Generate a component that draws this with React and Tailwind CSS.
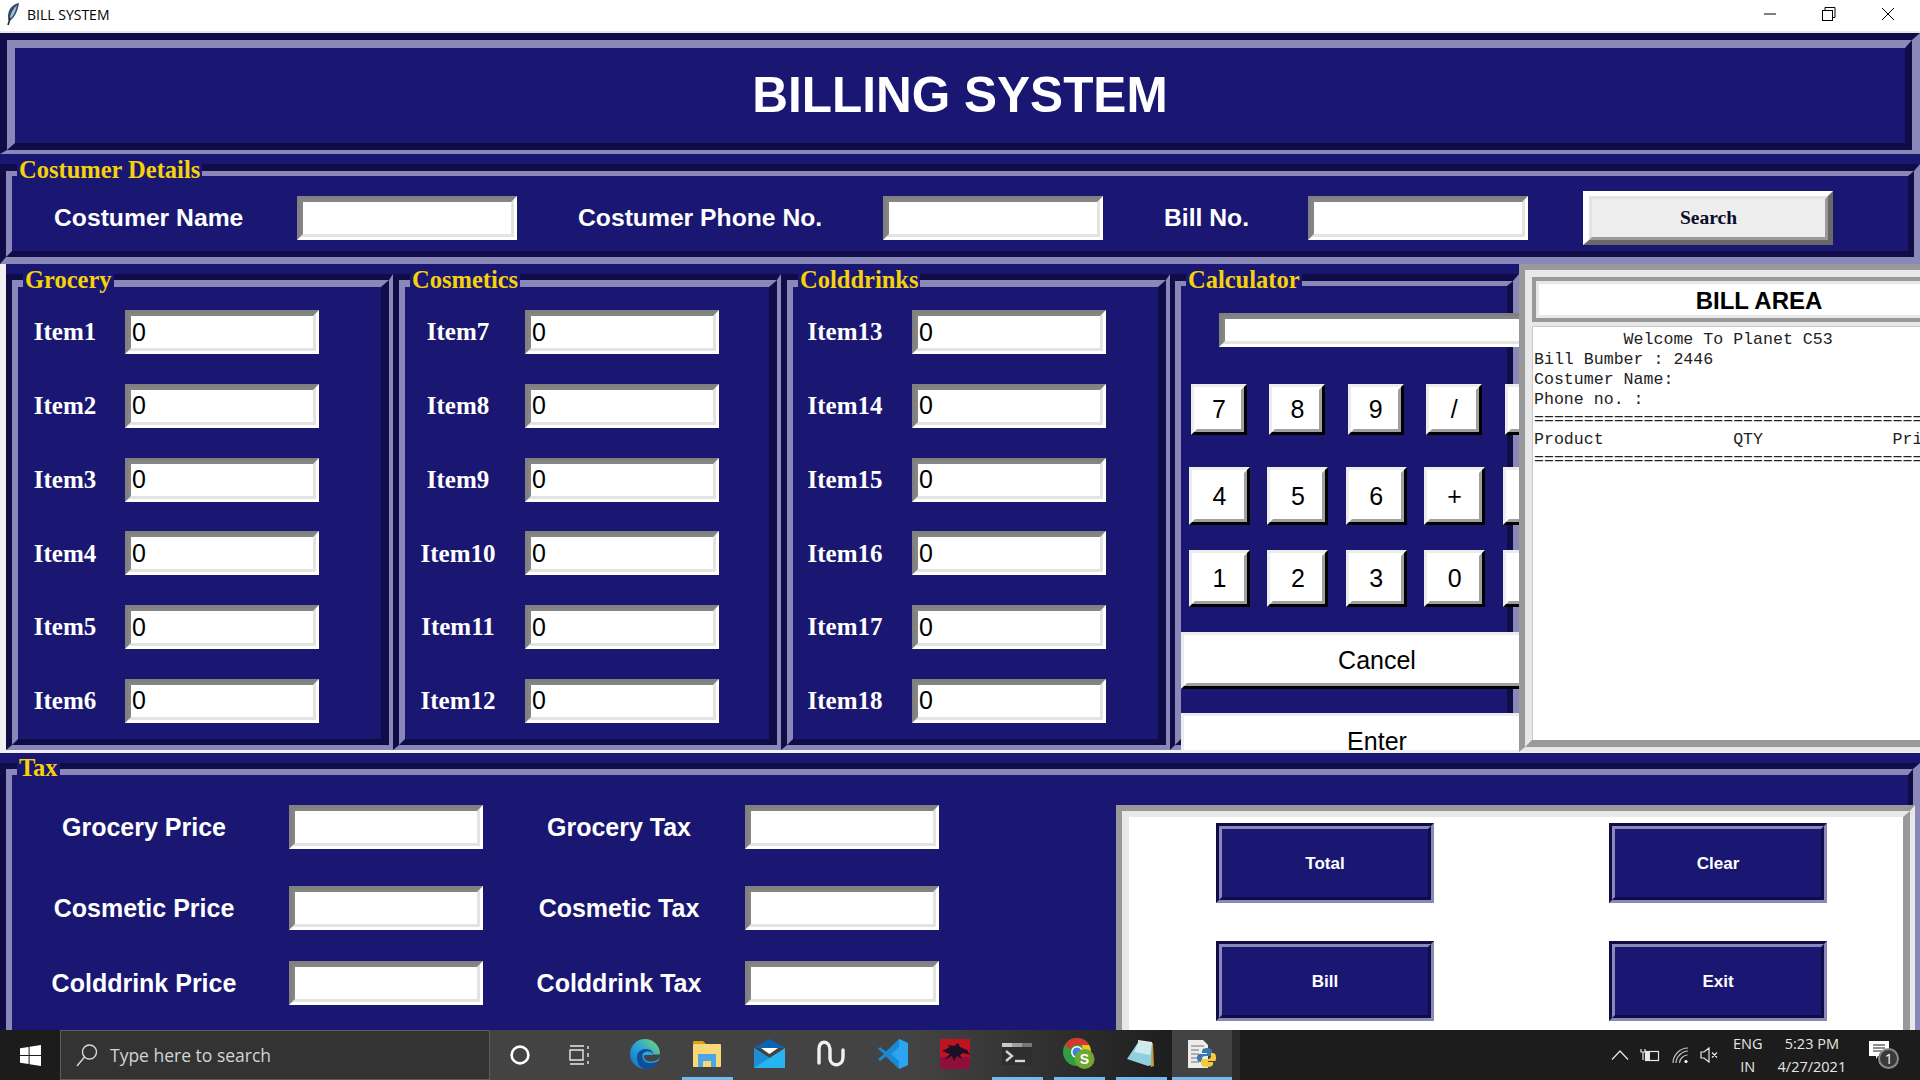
const serif = "font-['Liberation_Serif',serif]";
const arial = "font-['Liberation_Sans',Arial,sans-serif]";
const segoe = "font-['Open_Sans',sans-serif]";

const grocery = ["Item1", "Item2", "Item3", "Item4", "Item5", "Item6"];
const cosmetics = ["Item7", "Item8", "Item9", "Item10", "Item11", "Item12"];
const colddrinks = ["Item13", "Item14", "Item15", "Item16", "Item17", "Item18"];
const billLine = "=".repeat(60);

const Legend = ({ text, className }) => (
  <span className={`absolute z-10 bg-[#1a1772] px-[2px] text-[24.5px] leading-[24px] font-bold whitespace-nowrap text-[#f5d20a] ${serif} ${className}`}>
    {text}
  </span>
);

const Field = ({ value, className = "" }) => (
  <div className={`box-border h-[44px] shrink-0 border-[3px] border-t-[#808080] border-r-white border-b-white border-l-[#808080] ${className}`}>
    <input
      readOnly
      value={value ?? ""}
      className={`box-border block h-full w-full border-[3px] border-t-[#858585] border-r-[#e3e3e3] border-b-[#e3e3e3] border-l-[#858585] bg-white pl-[1px] text-[25px] text-black outline-none ${arial}`}
    />
  </div>
);

const ItemFrame = ({ title, items, widthClass, labelClass }) => (
  <div className={`relative box-border h-[476px] shrink-0 border-t-[6px] border-r-[4px] border-b-[5px] border-l-[6px] border-t-[#100c48] border-r-[#8a88b8] border-b-[#8a88b8] border-l-[#100c48] ${widthClass}`}>
    <Legend text={title} className="top-[-12px] left-[11px]" />
    <div className="box-border flex h-full flex-col gap-[29.8px] border-t-[7px] border-r-[8px] border-b-[6px] border-l-[6px] border-t-[#8a88b8] border-r-[#100c48] border-b-[#100c48] border-l-[#8a88b8] pt-[23px]">
      {items.map((item) => (
        <div key={item} className="flex items-center">
          <span className={`text-center text-[25px] font-bold text-white ${serif} ${labelClass}`}>{item}</span>
          <Field value="0" className="w-[194px]" />
        </div>
      ))}
    </div>
  </div>
);

const CalcKey = ({ label, className }) => (
  <div className={`box-border shrink-0 border-[3px] border-t-[#ececec] border-r-black border-b-black border-l-[#ececec] ${className}`}>
    <button className={`box-border block h-full w-full border-[3px] border-t-white border-r-[#a0a0a0] border-b-[#a0a0a0] border-l-white bg-white pt-[1px] text-[25px] text-black ${arial}`}>
      {label}
    </button>
  </div>
);

const TaxRow = ({ first, second, className }) => (
  <div className={`flex items-center ${className}`}>
    <span className={`w-[264px] pt-[1px] text-center text-[25px] font-bold whitespace-nowrap text-white ${arial}`}>{first}</span>
    <Field className="ml-[13px] w-[194px]" />
    <span className={`ml-[20px] w-[232px] pt-[1px] text-center text-[25px] font-bold whitespace-nowrap text-white ${arial}`}>{second}</span>
    <Field className="ml-[10px] w-[194px]" />
  </div>
);

const ActionButton = ({ label }) => (
  <div className="box-border h-[80px] w-[218px] border-[3px] border-t-[#100c48] border-r-[#8a88b8] border-b-[#8a88b8] border-l-[#100c48]">
    <button className={`box-border block h-full w-full border-[3px] border-t-[#8a88b8] border-r-[#100c48] border-b-[#100c48] border-l-[#8a88b8] bg-[#1a1772] pt-[2px] text-[17px] font-bold text-white ${arial}`}>
      {label}
    </button>
  </div>
);

const Feather = () => (
  <svg width="12" height="22" viewBox="0 0 12 22">
    <path d="M12 0C6 1 1 6 1 13c0 2 0 4 1 5 6-3 9-11 10-18z" fill="#2f4c72" />
    <path d="M10 2C7 5 4 9 3 14l1 1c3-3 5-8 6-13z" fill="#a9bdd4" />
    <path d="M3 16 1 22" stroke="#222" strokeWidth="1.6" />
  </svg>
);

const StartIcon = () => (
  <svg width="21" height="21" viewBox="0 0 21 21" fill="white">
    <path d="M0 3.2 8.6 2v8H0zM9.6 1.8 21 0v10H9.6zM0 11h8.6v8L0 17.8zM9.6 11H21v10L9.6 19.2z" />
  </svg>
);

const SearchIcon = () => (
  <svg width="24" height="24" viewBox="0 0 24 24" fill="none" stroke="#d8d8d8" strokeWidth="1.4">
    <circle cx="14.5" cy="9" r="7" />
    <path d="M9.5 14 2 23" />
  </svg>
);

const CortanaIcon = () => (
  <svg width="22" height="22" viewBox="0 0 22 22" fill="none" stroke="white" strokeWidth="2.6">
    <circle cx="11" cy="11" r="8.4" />
  </svg>
);

const TaskViewIcon = () => (
  <svg width="22" height="20" viewBox="0 0 22 20" fill="none" stroke="#e8e8e8" strokeWidth="1.4">
    <path d="M1 1h14M1 19h14M1 5h13v10H1zM19 1v3M19 8v4M19 16v3" />
  </svg>
);

const EdgeIcon = () => (
  <svg width="32" height="32" viewBox="0 0 32 32">
    <defs>
      <linearGradient id="edgeA" x1="0" y1="1" x2="1" y2="0">
        <stop offset="0" stopColor="#0f6cbd" />
        <stop offset="0.55" stopColor="#2fa8d8" />
        <stop offset="1" stopColor="#7ddc5c" />
      </linearGradient>
    </defs>
    <circle cx="16" cy="16" r="15" fill="url(#edgeA)" />
    <path d="M8 19c0-5 4-8 9-8 5 0 8 3 7 6H15c-2 0-2 2-1 4 1 3 4 4 8 4 3 0 6-1 8-3-2 5-7 9-13 9-6 0-9-6-9-12z" fill="#0b4f9c" />
    <path d="M31 16c0 1 0 2-.5 3.500-1 2-4 4-8.500 4-4 0-7-2-7-5 0-1 1-2 2-2h9c2 0 4 0 5.500-.5z" fill="#434343" />
    <path d="M13 18.500c0-3 3-5 6-5 3 0 5 1 5 3.500h-9c-1 0-2 .5-2 1.500z" fill="#2fa8d8" />
  </svg>
);

const ExplorerIcon = () => (
  <svg width="28" height="26" viewBox="0 0 28 26">
    <path d="M0 1a1 1 0 0 1 1-1h9l3 3h-13z" fill="#e0a11a" />
    <rect y="3" width="28" height="23" rx="1" fill="#f9d877" />
    <path d="M5 13h18v13h-5v-6h-8v6H5z" fill="#4ba5e6" />
    <rect x="10" y="20" width="8" height="6" fill="#f9d877" />
  </svg>
);

const MailIcon = () => (
  <svg width="31" height="29" viewBox="0 0 31 29">
    <path d="M0 9 15.500 0 31 9z" fill="#0b63b5" />
    <path d="M7 9h17l-8.500 6z" fill="white" />
    <path d="M0 9l15.500 10L31 9v20H0z" fill="#27b4ef" />
    <path d="M0 9l15.500 10L0 29z" fill="#1c8fd8" />
  </svg>
);

const WaveIcon = () => (
  <svg width="28" height="30" viewBox="0 0 28 30" fill="none" stroke="#f0f0f0" strokeWidth="3.4" strokeLinecap="round">
    <path d="M2 24V10c0-9 10-9 11 0v10c1 8 13 8 13-2v-7" />
  </svg>
);

const CodeIcon = () => (
  <svg width="30" height="30" viewBox="0 0 30 30">
    <path d="M21 0 30 4v22l-9 4-13-12.500L2 22l-2-2 6-5-6-5 2-2 6 4.500z" fill="#1b88d4" />
    <path d="M21 0 30 4v22l-9 4zM21 8l-8 7 8 7z" fill="#2ba5ee" fillRule="evenodd" />
  </svg>
);

const DragonIcon = () => (
  <svg width="30" height="30" viewBox="0 0 30 30">
    <rect width="30" height="30" fill="#c1121f" />
    <rect y="18" width="30" height="12" fill="#8f0f3a" />
    <path d="M2 12 10 8 7 6l7 1 4-3 2 4 7 3 3 5-7-2-3 2 2 4-5-3-3 5-2-5-8 4 6-6z" fill="#1a0f26" />
  </svg>
);

const TerminalIcon = () => (
  <svg width="30" height="22" viewBox="0 0 30 22">
    <rect width="30" height="22" rx="1" fill="#2e2e2e" />
    <rect width="10" height="4" fill="#c8c8c8" />
    <rect x="10" width="10" height="4" fill="#a0a0a0" />
    <rect x="20" width="10" height="4" fill="#777" />
    <path d="M4 8l6 5-6 5" fill="none" stroke="#d0d0d0" strokeWidth="2.4" />
    <path d="M13 18h10" stroke="#d8d8d8" strokeWidth="2.4" />
  </svg>
);

const ChromeIcon = () => (
  <svg width="32" height="32" viewBox="0 0 32 32">
    <circle cx="14" cy="14" r="14" fill="#2f9e44" />
    <path d="M14 0a14 14 0 0 1 12.100 7H14a7 7 0 0 0-6.500 4.500L2 7a14 14 0 0 1 12-7z" fill="#d8362a" />
    <path d="M26.100 7A14 14 0 0 1 28 14l-8 2-1-9z" fill="#f6c026" />
    <circle cx="14" cy="14" r="6" fill="white" />
    <circle cx="14" cy="14" r="4.500" fill="#3f7fe8" />
    <circle cx="21.500" cy="21" r="10" fill="#6ea832" />
    <text x="21.500" y="26" textAnchor="middle" fontSize="14" fontWeight="700" fill="white" fontFamily="Liberation Sans, sans-serif">S</text>
  </svg>
);

const NotepadIcon = () => (
  <svg width="28" height="27" viewBox="0 0 28 27">
    <path d="M12 1 26 3l1 23-3 1z" fill="#c79a3e" />
    <path d="M12 1 25 3l-1 22-3 1L0 19z" fill="#8fd0dc" />
    <path d="M12 1 25 3 23 15 7 12z" fill="#cfeaee" />
    <path d="M11 0 25 2v2L11 2z" fill="#e8e8e8" />
  </svg>
);

const PythonIcon = () => (
  <svg width="28" height="28" viewBox="0 0 28 28">
    <path d="M0 0h15l5 5v23H0z" fill="#ececec" />
    <path d="M3 6h13M3 10h8M3 14h8M3 18h8M3 22h8" stroke="#9a9a9a" strokeWidth="1.500" />
    <path d="M19 8c-3 0-5 1-5 3v2h5v1h-7c-2 0-3 1.500-3 4 0 2 1 4 3 4h2v-3c0-2 1-3 3-3h5c1 0 2-1 2-2v-3c0-2-2-3-5-3z" fill="#3a76b0" />
    <path d="M20 27c3 0 5-1 5-3v-2h-5v-1h7c1 0 1-2 1-4s-1-4-3-4h-2v3c0 2-1 3-3 3h-5c-1 0-2 1-2 2v3c0 2 3 3 7 3z" fill="#f4c93c" />
  </svg>
);

const apps = [
  { key: "edge", icon: <EdgeIcon /> },
  { key: "explorer", icon: <ExplorerIcon />, open: true },
  { key: "mail", icon: <MailIcon /> },
  { key: "wave", icon: <WaveIcon /> },
  { key: "code", icon: <CodeIcon /> },
  { key: "dragon", icon: <DragonIcon /> },
  { key: "terminal", icon: <TerminalIcon />, open: true },
  { key: "chrome", icon: <ChromeIcon />, open: true },
  { key: "notepad", icon: <NotepadIcon />, open: true },
];

const Taskbar = () => (
  <div className={`flex h-[50px] shrink-0 bg-[#1c1c1c] text-[14.5px] text-[#e6e6e6] ${segoe}`}>
    <div className="flex w-[60px] items-center justify-center pr-[0px]">
      <StartIcon />
    </div>
    <div className="box-border flex w-[430px] items-center border border-[#5c5c5c] bg-[#333333] pl-[14px]">
      <SearchIcon />
      <span className="ml-[11px] text-[17.5px] text-[#d4d4d4]">Type here to search</span>
    </div>
    <div className="flex bg-[linear-gradient(90deg,#434343_0%,#434343_62%,#1e1e1e_100%)]">
      <div className="flex w-[60px] items-center justify-center">
        <CortanaIcon />
      </div>
      <div className="mr-[4px] flex w-[60px] items-center justify-center">
        <TaskViewIcon />
      </div>
      {apps.map((app) => (
        <div key={app.key} className="flex w-[62px] flex-col items-center">
          <div className="flex flex-1 items-center justify-center">{app.icon}</div>
          <div className={`h-[3px] w-[51px] ${app.open ? "bg-[#76b9ed]" : ""}`} />
        </div>
      ))}
    </div>
    <div className="flex w-[60px] flex-col bg-[#434343]">
      <div className="flex flex-1 items-center justify-center">
        <PythonIcon />
      </div>
      <div className="h-[3px] bg-[#76b9ed]" />
    </div>
    <div className="flex flex-1 items-center border-l-[8px] border-l-[#2a2a2a]">
      <svg className="ml-[371px]" width="18" height="10" viewBox="0 0 18 10" fill="none" stroke="#e8e8e8" strokeWidth="1.2">
        <path d="M1 9.500 9 1l8 8.500" />
      </svg>
      <svg className="ml-[11px]" width="20" height="16" viewBox="0 0 20 16" fill="none" stroke="#e8e8e8" strokeWidth="1.2">
        <rect x="5.500" y="4.500" width="13" height="9" />
        <rect x="6" y="5" width="4" height="8" fill="#e8e8e8" stroke="none" />
        <path d="M1 2v3h4V2M3 5v8" />
      </svg>
      <svg className="ml-[12px]" width="17" height="17" viewBox="0 0 17 17" fill="none" stroke="#c8c8c8" strokeWidth="1.1">
        <path d="M1 16C1 8 8 1 16 1M4 16c0-6 6-12 12-12M7.500 16c0-4 4-8 8-8" />
        <circle cx="14" cy="14.500" r="1.600" fill="white" stroke="none" />
      </svg>
      <svg className="ml-[11px]" width="19" height="16" viewBox="0 0 19 16" fill="none" stroke="#e8e8e8" strokeWidth="1.2">
        <path d="M1 5h3l5-4v14l-5-4H1zM12 5.500l5 5M17 5.500l-5 5" />
      </svg>
      <div className="ml-[14px] flex flex-col items-center leading-[23px]">
        <span>ENG</span>
        <span>IN</span>
      </div>
      <div className="ml-[15px] flex flex-col items-center leading-[23px]">
        <span>5:23 PM</span>
        <span>4/27/2021</span>
      </div>
      <div className="relative ml-[23px] h-[28px] w-[30px]">
        <svg width="20" height="18" viewBox="0 0 20 18" fill="white">
          <path d="M0 0h20v15H9l-2 3v-3H0z" />
          <path d="M4 4h12M4 7h12M4 10h9" stroke="#1c1c1c" strokeWidth="1.2" />
        </svg>
        <span className="absolute top-[7px] left-[9px] flex h-[21px] w-[21px] items-center justify-center rounded-full border-2 border-[#8a8a8a] bg-[#3a3a3a] text-[14px] text-white">
          1
        </span>
      </div>
    </div>
  </div>
);

export default function App() {
  return (
    <div className="flex h-screen w-full flex-col overflow-hidden bg-white">
      {/* Window title bar */}
      <div className={`flex h-[33px] shrink-0 items-center border-b-[2px] border-b-[#e9e9e9] bg-white pb-[3px] text-[14px] text-black ${segoe}`}>
        <span className="ml-[7px] flex">
          <Feather />
        </span>
        <span className="ml-[8px] flex-1">BILL SYSTEM</span>
        <svg width="14" height="2" viewBox="0 0 14 2" stroke="black">
          <path d="M0 1h12" />
        </svg>
        <svg className="ml-[44px]" width="14" height="14" viewBox="0 0 14 14" fill="none" stroke="black">
          <rect x="0.500" y="3.500" width="10" height="10" />
          <path d="M3 3V.5h10v10h-2.500" />
        </svg>
        <svg className="mr-[25px] ml-[45px]" width="14" height="14" viewBox="0 0 14 14" fill="none" stroke="black">
          <path d="M1 1l12 12M13 1 1 13" />
        </svg>
      </div>

      <div className="min-h-0 flex-1 overflow-hidden bg-[#1a1772]">
        {/* Heading */}
        <div className="box-border h-[121px] border-t-[7px] border-r-[8px] border-b-[4px] border-l-[7px] border-t-[#100c48] border-r-[#8a88b8] border-b-[#8a88b8] border-l-[#100c48]">
          <div className="box-border flex h-full items-center justify-center border-t-[8px] border-r-[7px] border-b-[7px] border-l-[8px] border-t-[#8a88b8] border-r-[#100c48] border-b-[#100c48] border-l-[#8a88b8]">
            <h1 className={`text-[49.5px] font-bold text-white ${arial}`}>BILLING SYSTEM</h1>
          </div>
        </div>

        {/* Customer details */}
        <div className="relative mt-[10px] box-border h-[100px] border-t-[7px] border-r-[6px] border-b-[7px] border-l-[6px] border-t-[#100c48] border-r-[#8a88b8] border-b-[#8a88b8] border-l-[#100c48]">
          <Legend text="Costumer Details" className="top-[-13px] left-[11px]" />
          <div className={`box-border flex h-full items-center border-t-[5px] border-r-[6px] border-b-[6px] border-l-[6px] border-t-[#8a88b8] border-r-[#100c48] border-b-[#100c48] border-l-[#8a88b8] pt-[9px] text-[24.7px] font-bold whitespace-nowrap text-white ${arial}`}>
            <span className="ml-[42px] w-[243px]">Costumer Name</span>
            <Field className="w-[220px]" />
            <span className="ml-[61px] w-[244px]">Costumer Phone No.</span>
            <Field className="ml-[61px] w-[220px]" />
            <span className="ml-[61px] w-[83px]">Bill No.</span>
            <Field className="ml-[61px] w-[220px]" />
            <div className="ml-[55px] box-border h-[54px] w-[250px] border-t-[5px] border-r-[5px] border-b-[5px] border-l-[6px] border-t-white border-r-[#696969] border-b-[#696969] border-l-white">
              <button className={`box-border block h-full w-full border-[3px] border-t-[#e3e3e3] border-r-[#9a9a9a] border-b-[#9a9a9a] border-l-[#e3e3e3] bg-[#eeeeee] text-[19.5px] font-bold text-[#0b0b2a] ${serif}`}>
                Search
              </button>
            </div>
          </div>
        </div>

        {/* Products, calculator and bill */}
        <div className="box-border flex h-[489px] bg-[#f0f0f0] pb-[1px] pl-[6px]">
          <div className="flex h-[486px] w-[1513px] shrink-0 overflow-hidden bg-[#1a1772] pt-[10px]">
            <ItemFrame title="Grocery" items={grocery} widthClass="w-[387px]" labelClass="mr-[13px] w-[94px]" />
            <ItemFrame title="Cosmetics" items={cosmetics} widthClass="w-[388px]" labelClass="mr-[14px] w-[106px]" />
            <ItemFrame title="Colddrinks" items={colddrinks} widthClass="w-[389px]" labelClass="mr-[15px] w-[104px]" />
            <div className="relative box-border h-[476px] w-[349px] shrink-0 border-t-[7px] border-r-[6px] border-b-[5px] border-l-[5px] border-t-[#100c48] border-r-[#8a88b8] border-b-[#8a88b8] border-l-[#100c48]">
              <Legend text="Calculator" className="top-[-13px] left-[11px]" />
              <div className="box-border h-full border-t-[5px] border-r-[6px] border-b-[6px] border-l-[6px] border-t-[#8a88b8] border-r-[#100c48] border-b-[#100c48] border-l-[#8a88b8] pt-[27px]">
                <Field className="ml-[38px] !h-[34px] w-[340px]" />
                <div className="mt-[37px] flex gap-[22.4px] pl-[10px]">
                  {["7", "8", "9", "/", ""].map((k, i) => (
                    <CalcKey key={i} label={k} className="h-[51px] w-[56px]" />
                  ))}
                </div>
                <div className="mt-[32px] flex gap-[17.4px] pl-[8px]">
                  {["4", "5", "6", "+", ""].map((k, i) => (
                    <CalcKey key={i} label={k} className="h-[58px] w-[61px]" />
                  ))}
                </div>
                <div className="mt-[25px] flex gap-[17.4px] pl-[8px]">
                  {["1", "2", "3", "0", ""].map((k, i) => (
                    <CalcKey key={i} label={k} className="h-[57px] w-[61px]" />
                  ))}
                </div>
                <CalcKey label="Cancel" className="mt-[25px] h-[57px] w-[392px]" />
                <CalcKey label="Enter" className="mt-[24px] h-[57px] w-[392px]" />
              </div>
            </div>
          </div>

          <div className="h-[488px] w-[401px] shrink-0 overflow-hidden">
            <div className="box-border h-full w-[480px] border-t-[6px] border-b-[5px] border-l-[6px] border-t-[#999999] border-b-[#e8e8e8] border-l-[#999999]">
              <div className="box-border flex h-full flex-col border-t-[7px] border-b-[7px] border-l-[7px] border-t-[#e8e8e8] border-b-[#999999] border-l-[#e8e8e8] bg-[#e8e8e8]">
                <div className="box-border h-[45px] w-[454px] shrink-0 border-[4px] border-t-[#999999] border-b-[#999999] border-l-[#999999]">
                  <div className={`box-border flex h-full items-center justify-center border-[3px] border-t-[#e8e8e8] border-b-[#e8e8e8] border-l-[#e8e8e8] bg-white pt-[2px] text-[24px] font-bold text-black ${arial}`}>
                    BILL AREA
                  </div>
                </div>
                <pre className="mt-[4px] min-h-0 flex-1 overflow-hidden border-t border-l border-[#c8c8c8] bg-white pt-[3px] pl-[1px] font-['Liberation_Mono',monospace] text-[16.6px] leading-[20px] text-[#222222]">
                  {`         Welcome To Planet C53
Bill Bumber : 2446
Costumer Name:
Phone no. :
${billLine}
Product             QTY             Price
${billLine}`}
                </pre>
              </div>
            </div>
          </div>
        </div>

        {/* Tax and actions */}
        <div className="relative mt-[10px] box-border h-[300px] border-t-[6px] border-r-[7px] border-b-[6px] border-l-[6px] border-t-[#100c48] border-r-[#8a88b8] border-b-[#8a88b8] border-l-[#100c48]">
          <Legend text="Tax" className="top-[-13px] left-[11px]" />
          <div className="box-border flex h-full border-t-[6px] border-r-[5px] border-b-[6px] border-l-[6px] border-t-[#8a88b8] border-r-[#100c48] border-b-[#100c48] border-l-[#8a88b8]">
            <div className="w-[1104px] shrink-0 pt-[30px]">
              <TaxRow first="Grocery Price" second="Grocery Tax" />
              <TaxRow first="Cosmetic Price" second="Cosmetic Tax" className="mt-[37px]" />
              <TaxRow first="Colddrink Price" second="Colddrink Tax" className="mt-[31px]" />
            </div>
            <div className="mt-[30px] box-border h-[300px] w-[799px] shrink-0 border-t-[6px] border-r-[5px] border-l-[6px] border-t-[#999999] border-r-[#e8e8e8] border-l-[#999999]">
              <div className="box-border h-full border-t-[6px] border-r-[7px] border-l-[7px] border-t-[#e8e8e8] border-r-[#999999] border-l-[#e8e8e8] bg-white pt-[6px] pl-[87px]">
                <div className="grid grid-cols-[218px_218px] gap-x-[175px] gap-y-[38px]">
                  <ActionButton label="Total" />
                  <ActionButton label="Clear" />
                  <ActionButton label="Bill" />
                  <ActionButton label="Exit" />
                </div>
              </div>
            </div>
          </div>
        </div>
      </div>

      <Taskbar />
    </div>
  );
}
